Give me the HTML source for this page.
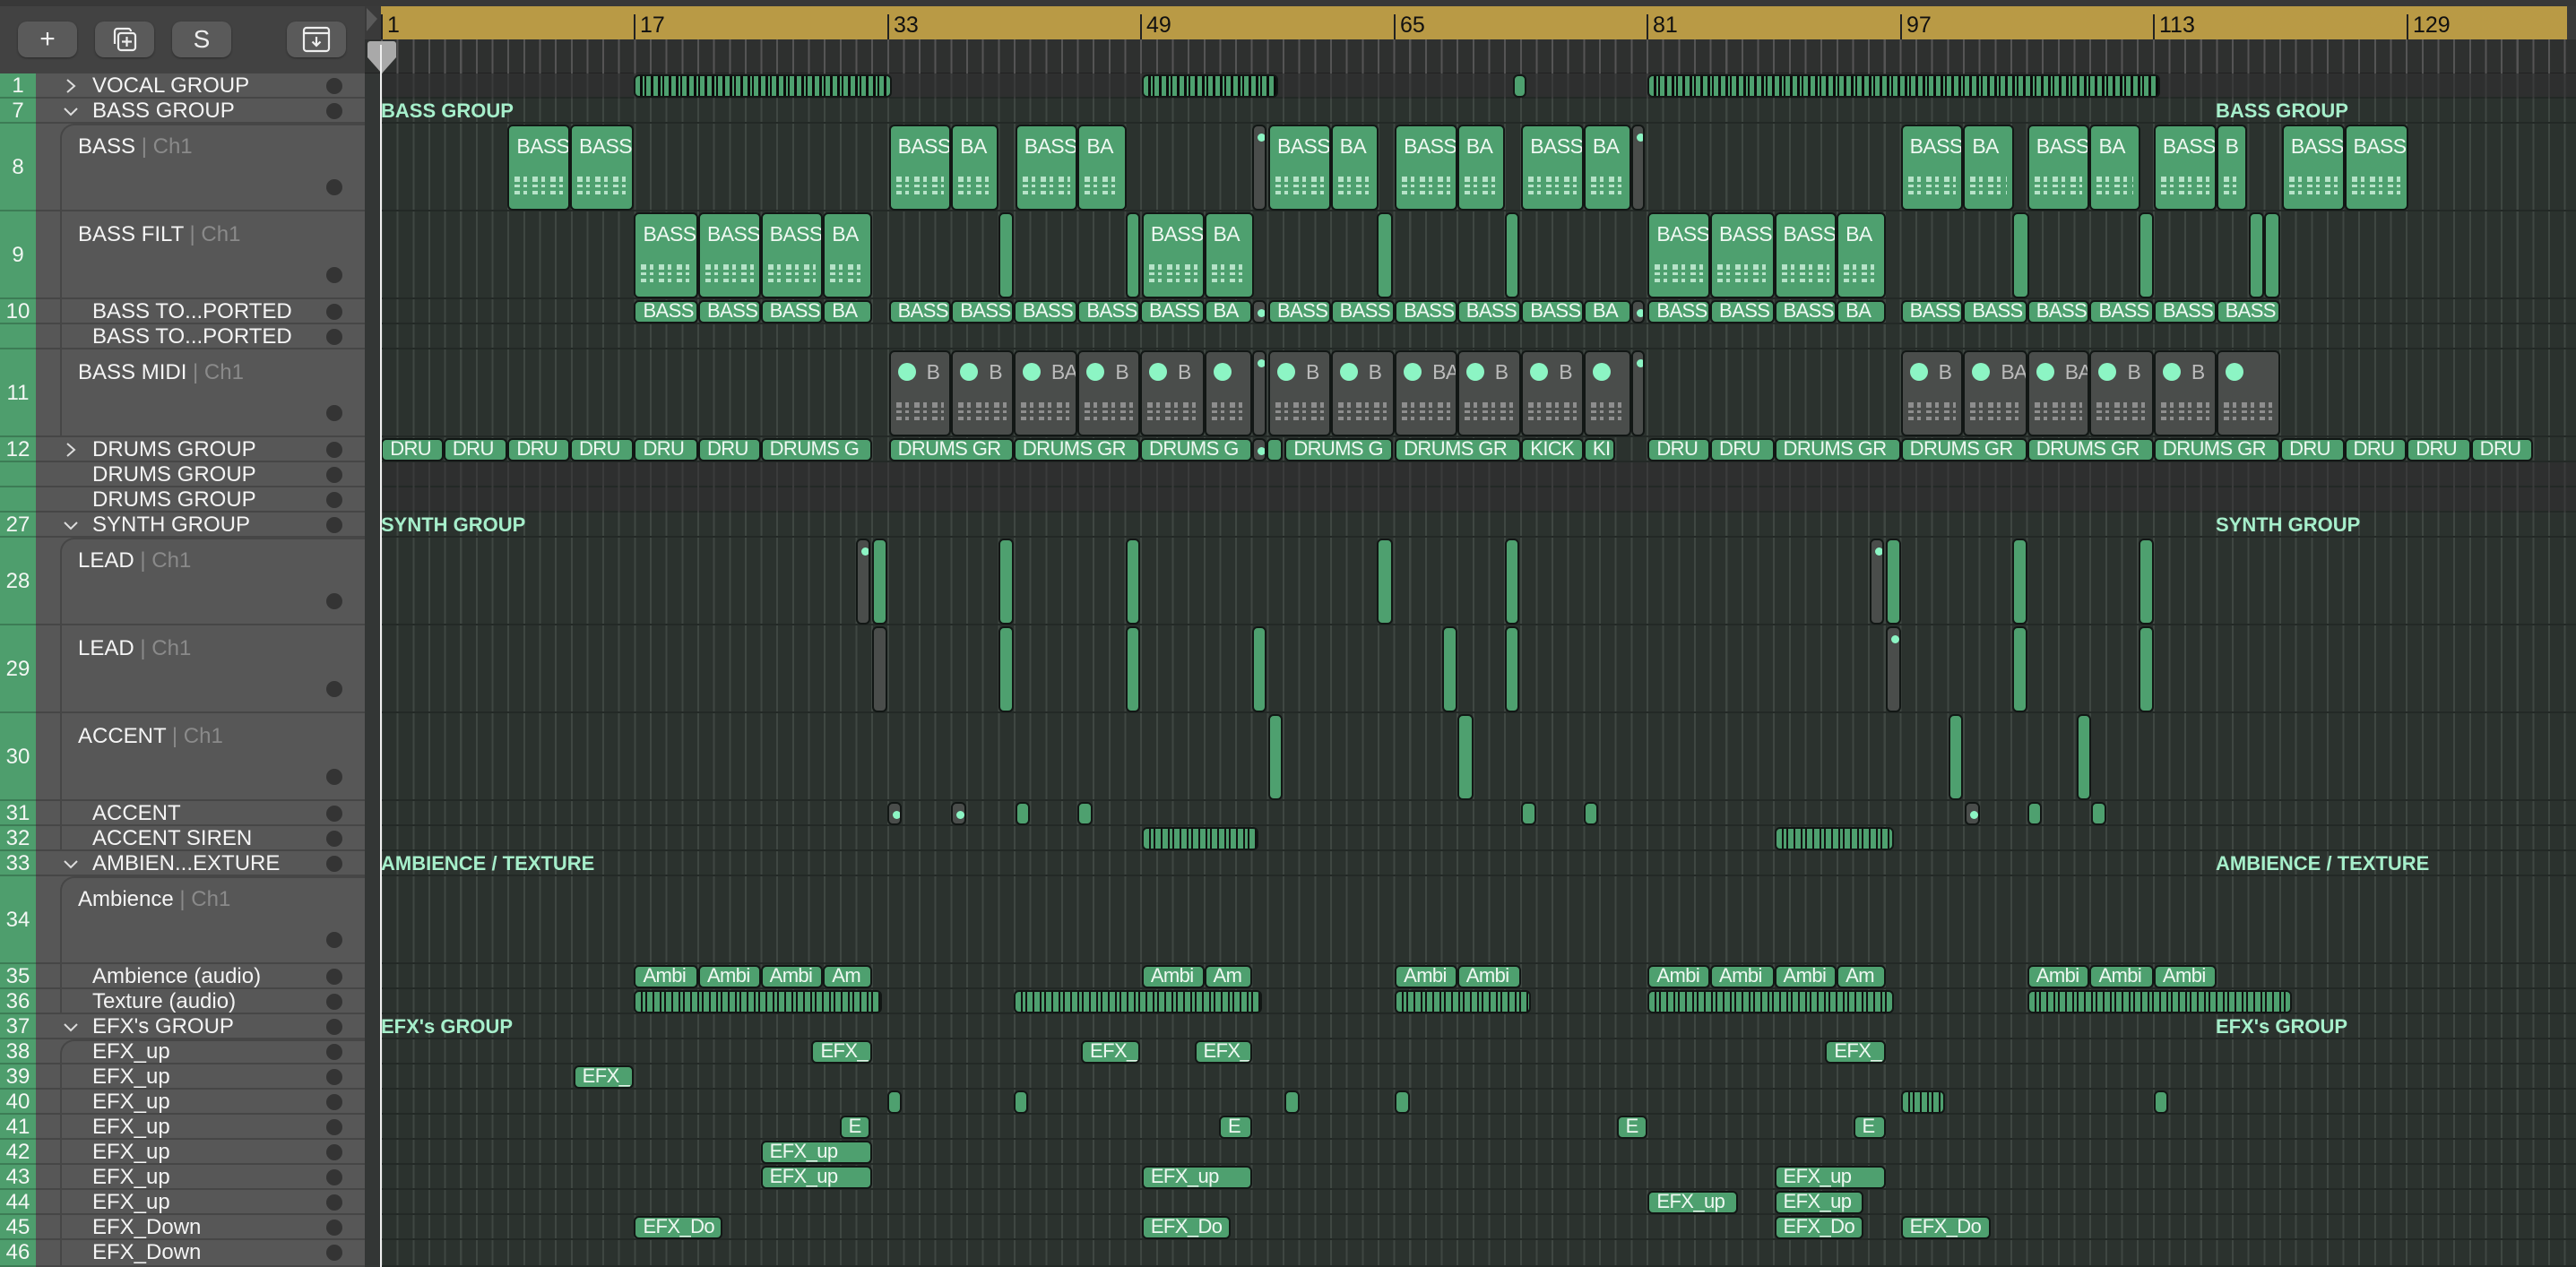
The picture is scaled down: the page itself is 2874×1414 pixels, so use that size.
<!DOCTYPE html>
<html><head><meta charset="utf-8"><style>
*{margin:0;padding:0;box-sizing:border-box}
body{width:2874px;height:1414px;background:#2b322e;overflow:hidden;position:relative;font-family:"Liberation Sans",sans-serif}
.abs{position:absolute}
#top{left:0;top:0;width:425px;height:82px;background:#424242;border-top:7px solid #383838}
.btn{position:absolute;top:24px;width:66px;height:40px;background:#5a5a5a;border-radius:10px;box-shadow:0 1px 2px #2a2a2a;color:#eee;display:flex;align-items:center;justify-content:center;font-size:30px}
#ruler{left:425px;top:7px;width:2439px;height:37px;background:#b99a45}
#rtop{left:407px;top:0;width:2467px;height:7px;background:#383838}
#rright{left:2864px;top:7px;width:10px;height:75px;background:#3a3a3a}
#sub{left:407px;top:44px;width:2467px;height:38px;background:#2e302f;border-bottom:1px solid #222}
.bn{position:absolute;top:9px;font-size:25px;color:#111;padding-left:5px;border-left:2px solid #222;height:30px;line-height:24px}
#grid{left:425px;top:82px;width:2449px;height:1332px;background:repeating-linear-gradient(90deg,#3f4742 0 2px,transparent 2px 17.65px)}
#subgrid{left:425px;top:44px;width:2449px;height:38px;background:repeating-linear-gradient(90deg,#555 0 2px,transparent 2px 17.65px)}
.row{position:absolute;left:425px;width:2449px;border-bottom:2px solid #232926}
.gray{background:#2e2f2f}
.hdr{position:absolute;left:0;width:407px}
.num{position:absolute;left:0;top:0;width:40px;height:100%;background:#4e9e6d;color:#f2f7f3;font-size:24px;text-align:center;border-bottom:2px solid #3c7c55}
.hb{position:absolute;left:40px;right:0;top:0;bottom:0;background:#575757;border-bottom:2px solid #464646}
.name{position:absolute;left:103px;color:#f4f4f4;font-size:24px;white-space:nowrap}
.name .ch{color:#8a8a8a}
.chev{position:absolute;left:68px;top:3px;width:22px;height:22px}
.dot{position:absolute;left:364px;width:18px;height:18px;border-radius:50%;background:#343434}
.inset{position:absolute;left:67px;right:0;top:0;bottom:0;border-left:2px solid #464646}
.c{position:absolute;left:calc(var(--a)*1.8329px);width:calc((var(--b) - var(--a))*1.8329px);top:1px;bottom:1px;background:#4ea06f;border:2px solid #121715;border-radius:6px;color:#eef8f1;font-size:22px;letter-spacing:-0.6px;padding-left:8px;overflow:hidden;white-space:nowrap;line-height:24px}
.s .c{line-height:20px}
.g{background:#4a4d4b}
.st{background:repeating-linear-gradient(90deg,#4ea06f 0 6px,#111 6px 8px,#4ea06f 8px 11px,#111 11px 13px,#4ea06f 13px 19px,#111 19px 21px);padding:0}
.vs{background:repeating-linear-gradient(90deg,#4ea06f 0 5px,#0b0b0b 5px 8px,#4ea06f 8px 10px,#0b0b0b 10px 12px,#4ea06f 12px 17px,#0b0b0b 17px 20px);padding:0}
.big .c{padding-top:10px;font-size:23px}
.nt{position:absolute;left:6px;right:6px;bottom:14px;height:22px;background:repeating-linear-gradient(90deg,#c9efd8 0 6px,transparent 6px 10px,#c9efd8 10px 14px,transparent 14px 20px);opacity:.85;-webkit-mask:linear-gradient(#000 0 6px,transparent 6px 9px,#000 9px 12px,transparent 12px 16px,#000 16px 20px,transparent 20px)}
.g .nt{background:repeating-linear-gradient(90deg,#9a9a9a 0 6px,transparent 6px 10px,#9a9a9a 10px 14px,transparent 14px 20px)}
.md{display:inline-block;width:20px;height:20px;border-radius:50%;background:#8cf5c4;margin-right:12px;vertical-align:-2px}
.sd{position:absolute;left:4px;top:8px;width:9px;height:9px;border-radius:50%;background:#8cf5c4}
.g{color:#bbb}
.gl{position:absolute;top:0;color:#a6efcb;font-weight:bold;font-size:22px;line-height:28px}
</style></head><body>
<div id="grid" class="abs"></div>

<div class="row gray" style="top:82px;height:28px"></div>
<div class="row" style="top:110px;height:28px"></div>
<div class="row" style="top:138px;height:98px"></div>
<div class="row" style="top:236px;height:98px"></div>
<div class="row" style="top:334px;height:28px"></div>
<div class="row" style="top:362px;height:28px"></div>
<div class="row" style="top:390px;height:98px"></div>
<div class="row" style="top:488px;height:28px"></div>
<div class="row gray" style="top:516px;height:28px"></div>
<div class="row gray" style="top:544px;height:28px"></div>
<div class="row" style="top:572px;height:28px"></div>
<div class="row" style="top:600px;height:98px"></div>
<div class="row" style="top:698px;height:98px"></div>
<div class="row" style="top:796px;height:98px"></div>
<div class="row" style="top:894px;height:28px"></div>
<div class="row" style="top:922px;height:28px"></div>
<div class="row" style="top:950px;height:28px"></div>
<div class="row" style="top:978px;height:98px"></div>
<div class="row" style="top:1076px;height:28px"></div>
<div class="row" style="top:1104px;height:28px"></div>
<div class="row" style="top:1132px;height:28px"></div>
<div class="row" style="top:1160px;height:28px"></div>
<div class="row" style="top:1188px;height:28px"></div>
<div class="row" style="top:1216px;height:28px"></div>
<div class="row" style="top:1244px;height:28px"></div>
<div class="row" style="top:1272px;height:28px"></div>
<div class="row" style="top:1300px;height:28px"></div>
<div class="row" style="top:1328px;height:28px"></div>
<div class="row" style="top:1356px;height:28px"></div>
<div class="row" style="top:1384px;height:30px"></div>
<div class="abs" style="left:425px;top:516px;width:2449px;height:56px;background:repeating-linear-gradient(90deg,#3a3b3b 0 2px,transparent 2px 17.65px)"></div>
<div class="abs" style="left:425px;top:82px;width:2449px;height:28px;background:repeating-linear-gradient(90deg,#3a3b3b 0 2px,transparent 2px 17.65px)"></div>

<div class="abs s" style="left:0;top:82px;height:28px;width:2874px">
<div class="c vs" style="--a:386;--b:543"></div>
<div class="c vs" style="--a:695;--b:778"></div>
<div class="c" style="--a:921;--b:929;padding:0"></div>
<div class="c vs" style="--a:1003;--b:1315"></div>
</div>
<div class="abs" style="left:0;top:110px;height:28px;width:2874px">
<div class="gl" style="left:425px">BASS GROUP</div><div class="gl" style="left:2472px">BASS GROUP</div>
</div>

<div class="abs big" style="left:0;top:138px;height:98px;width:2874px">
<div class="c" style="--a:309;--b:347">BASS<div class="nt"></div></div>
<div class="c" style="--a:347;--b:386">BASS<div class="nt"></div></div>
<div class="c" style="--a:541;--b:579">BASS<div class="nt"></div></div>
<div class="c" style="--a:579;--b:608">BA<div class="nt"></div></div>
<div class="c" style="--a:618;--b:656">BASS<div class="nt"></div></div>
<div class="c" style="--a:656;--b:686">BA<div class="nt"></div></div>
<div class="c g" style="--a:762;--b:771;padding:0"><div class="sd"></div></div>
<div class="c" style="--a:772;--b:810">BASS<div class="nt"></div></div>
<div class="c" style="--a:810;--b:839">BA<div class="nt"></div></div>
<div class="c" style="--a:849;--b:887">BASS<div class="nt"></div></div>
<div class="c" style="--a:887;--b:916">BA<div class="nt"></div></div>
<div class="c" style="--a:926;--b:964">BASS<div class="nt"></div></div>
<div class="c" style="--a:964;--b:993">BA<div class="nt"></div></div>
<div class="c g" style="--a:993;--b:1001;padding:0"><div class="sd"></div></div>
<div class="c" style="--a:1157;--b:1195">BASS<div class="nt"></div></div>
<div class="c" style="--a:1195;--b:1226">BA<div class="nt"></div></div>
<div class="c" style="--a:1234;--b:1272">BASS<div class="nt"></div></div>
<div class="c" style="--a:1272;--b:1303">BA<div class="nt"></div></div>
<div class="c" style="--a:1311;--b:1349">BASS<div class="nt"></div></div>
<div class="c" style="--a:1349;--b:1368">B<div class="nt"></div></div>
<div class="c" style="--a:1389;--b:1427">BASS<div class="nt"></div></div>
<div class="c" style="--a:1427;--b:1466">BASS<div class="nt"></div></div>
</div>

<div class="abs big" style="left:0;top:236px;height:98px;width:2874px">
<div class="c" style="--a:386;--b:425">BASS<div class="nt"></div></div>
<div class="c" style="--a:425;--b:463">BASS<div class="nt"></div></div>
<div class="c" style="--a:463;--b:501">BASS<div class="nt"></div></div>
<div class="c" style="--a:501;--b:531">BA<div class="nt"></div></div>
<div class="c" style="--a:608;--b:617;padding:0"></div>
<div class="c" style="--a:685;--b:694;padding:0"></div>
<div class="c" style="--a:695;--b:733">BASS<div class="nt"></div></div>
<div class="c" style="--a:733;--b:763">BA<div class="nt"></div></div>
<div class="c" style="--a:838;--b:848;padding:0"></div>
<div class="c" style="--a:916;--b:925;padding:0"></div>
<div class="c" style="--a:1003;--b:1041">BASS<div class="nt"></div></div>
<div class="c" style="--a:1041;--b:1080">BASS<div class="nt"></div></div>
<div class="c" style="--a:1080;--b:1118">BASS<div class="nt"></div></div>
<div class="c" style="--a:1118;--b:1148">BA<div class="nt"></div></div>
<div class="c" style="--a:1225;--b:1235;padding:0"></div>
<div class="c" style="--a:1302;--b:1311;padding:0"></div>
<div class="c" style="--a:1369;--b:1378;padding:0"></div>
<div class="c" style="--a:1378;--b:1388;padding:0"></div>
</div>

<div class="abs s" style="left:0;top:334px;height:28px;width:2874px">
<div class="c" style="--a:386;--b:425">BASS</div><div class="c" style="--a:425;--b:463">BASS</div><div class="c" style="--a:463;--b:501">BASS</div><div class="c" style="--a:501;--b:531">BA</div>
<div class="c" style="--a:541;--b:579">BASS</div><div class="c" style="--a:579;--b:617">BASS</div><div class="c" style="--a:617;--b:656">BASS</div><div class="c" style="--a:656;--b:694">BASS</div><div class="c" style="--a:694;--b:733">BASS</div><div class="c" style="--a:733;--b:762">BA</div>
<div class="c g" style="--a:762;--b:771;padding:0"><div class="sd"></div></div>
<div class="c" style="--a:772;--b:810">BASS</div><div class="c" style="--a:810;--b:849">BASS</div><div class="c" style="--a:849;--b:887">BASS</div><div class="c" style="--a:887;--b:926">BASS</div><div class="c" style="--a:926;--b:964">BASS</div><div class="c" style="--a:964;--b:993">BA</div>
<div class="c g" style="--a:993;--b:1001;padding:0"><div class="sd"></div></div>
<div class="c" style="--a:1003;--b:1041">BASS</div><div class="c" style="--a:1041;--b:1080">BASS</div><div class="c" style="--a:1080;--b:1118">BASS</div><div class="c" style="--a:1118;--b:1148">BA</div>
<div class="c" style="--a:1157;--b:1195">BASS</div><div class="c" style="--a:1195;--b:1234">BASS</div><div class="c" style="--a:1234;--b:1272">BASS</div><div class="c" style="--a:1272;--b:1311">BASS</div><div class="c" style="--a:1311;--b:1349">BASS</div><div class="c" style="--a:1349;--b:1388">BASS</div>
</div>

<div class="abs big" style="left:0;top:390px;height:98px;width:2874px">
<div class="c g" style="--a:541;--b:579"><span class="md"></span>B<div class="nt"></div></div>
<div class="c g" style="--a:579;--b:617"><span class="md"></span>B<div class="nt"></div></div>
<div class="c g" style="--a:617;--b:656"><span class="md"></span>BA<div class="nt"></div></div>
<div class="c g" style="--a:656;--b:694"><span class="md"></span>B<div class="nt"></div></div>
<div class="c g" style="--a:694;--b:733"><span class="md"></span>B<div class="nt"></div></div>
<div class="c g" style="--a:733;--b:762"><span class="md"></span><div class="nt"></div></div>
<div class="c g" style="--a:762;--b:771;padding:0"><div class="sd"></div></div>
<div class="c g" style="--a:772;--b:810"><span class="md"></span>B<div class="nt"></div></div>
<div class="c g" style="--a:810;--b:849"><span class="md"></span>B<div class="nt"></div></div>
<div class="c g" style="--a:849;--b:887"><span class="md"></span>BA<div class="nt"></div></div>
<div class="c g" style="--a:887;--b:926"><span class="md"></span>B<div class="nt"></div></div>
<div class="c g" style="--a:926;--b:964"><span class="md"></span>B<div class="nt"></div></div>
<div class="c g" style="--a:964;--b:993"><span class="md"></span><div class="nt"></div></div>
<div class="c g" style="--a:993;--b:1001;padding:0"><div class="sd"></div></div>
<div class="c g" style="--a:1157;--b:1195"><span class="md"></span>B<div class="nt"></div></div>
<div class="c g" style="--a:1195;--b:1234"><span class="md"></span>BA<div class="nt"></div></div>
<div class="c g" style="--a:1234;--b:1272"><span class="md"></span>BA<div class="nt"></div></div>
<div class="c g" style="--a:1272;--b:1311"><span class="md"></span>B<div class="nt"></div></div>
<div class="c g" style="--a:1311;--b:1349"><span class="md"></span>B<div class="nt"></div></div>
<div class="c g" style="--a:1349;--b:1388"><span class="md"></span><div class="nt"></div></div>
</div>

<div class="abs s" style="left:0;top:488px;height:28px;width:2874px">
<div class="c" style="--a:232;--b:270">DRU</div><div class="c" style="--a:270;--b:309">DRU</div><div class="c" style="--a:309;--b:347">DRU</div><div class="c" style="--a:347;--b:386">DRU</div><div class="c" style="--a:386;--b:425">DRU</div><div class="c" style="--a:425;--b:463">DRU</div><div class="c" style="--a:463;--b:531">DRUMS G</div>
<div class="c" style="--a:541;--b:617">DRUMS GR</div><div class="c" style="--a:617;--b:694">DRUMS GR</div><div class="c" style="--a:694;--b:762">DRUMS G</div>
<div class="c g" style="--a:762;--b:771;padding:0"><div class="sd"></div></div><div class="c" style="--a:771;--b:781;padding:0"></div>
<div class="c" style="--a:782;--b:848">DRUMS G</div><div class="c" style="--a:849;--b:926">DRUMS GR</div><div class="c" style="--a:926;--b:964">KICK</div><div class="c" style="--a:964;--b:983">KI</div>
<div class="c" style="--a:1003;--b:1041">DRU</div><div class="c" style="--a:1041;--b:1080">DRU</div><div class="c" style="--a:1080;--b:1157">DRUMS GR</div><div class="c" style="--a:1157;--b:1234">DRUMS GR</div><div class="c" style="--a:1234;--b:1311">DRUMS GR</div><div class="c" style="--a:1311;--b:1388">DRUMS GR</div><div class="c" style="--a:1388;--b:1427">DRU</div><div class="c" style="--a:1427;--b:1465">DRU</div><div class="c" style="--a:1465;--b:1504">DRU</div><div class="c" style="--a:1504;--b:1542">DRU</div>
</div>

<div class="abs" style="left:0;top:572px;height:28px;width:2874px">
<div class="gl" style="left:425px">SYNTH GROUP</div><div class="gl" style="left:2472px">SYNTH GROUP</div>
</div>
<div class="abs" style="left:0;top:600px;height:98px;width:2874px">
<div class="c g" style="--a:521;--b:530;padding:0"><div class="sd"></div></div><div class="c" style="--a:531;--b:540;padding:0"></div>
<div class="c" style="--a:608;--b:617;padding:0"></div><div class="c" style="--a:685;--b:694;padding:0"></div><div class="c" style="--a:838;--b:848;padding:0"></div><div class="c" style="--a:916;--b:925;padding:0"></div>
<div class="c g" style="--a:1138;--b:1147;padding:0"><div class="sd"></div></div><div class="c" style="--a:1148;--b:1157;padding:0"></div>
<div class="c" style="--a:1225;--b:1234;padding:0"></div><div class="c" style="--a:1302;--b:1311;padding:0"></div>
</div>
<div class="abs" style="left:0;top:698px;height:98px;width:2874px">
<div class="c g" style="--a:531;--b:540;padding:0"></div><div class="c" style="--a:608;--b:617;padding:0"></div><div class="c" style="--a:685;--b:694;padding:0"></div><div class="c" style="--a:762;--b:771;padding:0"></div><div class="c" style="--a:878;--b:887;padding:0"></div><div class="c" style="--a:916;--b:925;padding:0"></div>
<div class="c g" style="--a:1148;--b:1157;padding:0"><div class="sd"></div></div><div class="c" style="--a:1225;--b:1234;padding:0"></div><div class="c" style="--a:1302;--b:1311;padding:0"></div>
</div>
<div class="abs" style="left:0;top:796px;height:98px;width:2874px">
<div class="c" style="--a:772;--b:781;padding:0"></div><div class="c" style="--a:887;--b:897;padding:0"></div><div class="c" style="--a:1186;--b:1195;padding:0"></div><div class="c" style="--a:1264;--b:1273;padding:0"></div>
</div>
<div class="abs" style="left:0;top:894px;height:28px;width:2874px">
<div class="c g" style="--a:540;--b:549;padding:0"><div class="sd"></div></div><div class="c g" style="--a:579;--b:588;padding:0"><div class="sd"></div></div>
<div class="c" style="--a:618;--b:627;padding:0"></div><div class="c" style="--a:656;--b:665;padding:0"></div><div class="c" style="--a:926;--b:935;padding:0"></div><div class="c" style="--a:964;--b:973;padding:0"></div>
<div class="c g" style="--a:1196;--b:1205;padding:0"><div class="sd"></div></div><div class="c" style="--a:1234;--b:1243;padding:0"></div><div class="c" style="--a:1273;--b:1282;padding:0"></div>
</div>
<div class="abs" style="left:0;top:922px;height:28px;width:2874px">
<div class="c st" style="--a:695;--b:766"></div><div class="c st" style="--a:1080;--b:1153"></div>
</div>
<div class="abs" style="left:0;top:950px;height:28px;width:2874px">
<div class="gl" style="left:425px">AMBIENCE / TEXTURE</div><div class="gl" style="left:2472px">AMBIENCE / TEXTURE</div>
</div>
<div class="abs s" style="left:0;top:1076px;height:28px;width:2874px">
<div class="c" style="--a:386;--b:425">Ambi</div><div class="c" style="--a:425;--b:463">Ambi</div><div class="c" style="--a:463;--b:501">Ambi</div><div class="c" style="--a:501;--b:531">Am</div>
<div class="c" style="--a:695;--b:733">Ambi</div><div class="c" style="--a:733;--b:762">Am</div>
<div class="c" style="--a:849;--b:887">Ambi</div><div class="c" style="--a:887;--b:926">Ambi</div>
<div class="c" style="--a:1003;--b:1041">Ambi</div><div class="c" style="--a:1041;--b:1080">Ambi</div><div class="c" style="--a:1080;--b:1118">Ambi</div><div class="c" style="--a:1118;--b:1148">Am</div>
<div class="c" style="--a:1234;--b:1272">Ambi</div><div class="c" style="--a:1272;--b:1311">Ambi</div><div class="c" style="--a:1311;--b:1349">Ambi</div>
</div>
<div class="abs" style="left:0;top:1104px;height:28px;width:2874px">
<div class="c st" style="--a:386;--b:537"></div><div class="c st" style="--a:617;--b:768"></div><div class="c st" style="--a:849;--b:932"></div><div class="c st" style="--a:1003;--b:1153"></div><div class="c st" style="--a:1234;--b:1395"></div>
</div>
<div class="abs" style="left:0;top:1132px;height:28px;width:2874px">
<div class="gl" style="left:425px">EFX's GROUP</div><div class="gl" style="left:2472px">EFX's GROUP</div>
</div>
<div class="abs s" style="left:0;top:1160px;height:28px;width:2874px">
<div class="c" style="--a:494;--b:531">EFX_</div><div class="c" style="--a:658;--b:694">EFX_</div><div class="c" style="--a:727;--b:762">EFX_</div><div class="c" style="--a:1111;--b:1148">EFX_</div>
</div>
<div class="abs s" style="left:0;top:1188px;height:28px;width:2874px"><div class="c" style="--a:349;--b:386">EFX_</div></div>
<div class="abs" style="left:0;top:1216px;height:28px;width:2874px">
<div class="c" style="--a:540;--b:549;padding:0"></div><div class="c" style="--a:617;--b:626;padding:0"></div><div class="c" style="--a:782;--b:791;padding:0"></div><div class="c" style="--a:849;--b:858;padding:0"></div><div class="c st" style="--a:1157;--b:1184"></div><div class="c" style="--a:1311;--b:1320;padding:0"></div>
</div>
<div class="abs s" style="left:0;top:1244px;height:28px;width:2874px">
<div class="c" style="--a:511;--b:530">E</div><div class="c" style="--a:742;--b:762">E</div><div class="c" style="--a:984;--b:1003">E</div><div class="c" style="--a:1128;--b:1148">E</div>
</div>
<div class="abs s" style="left:0;top:1272px;height:28px;width:2874px"><div class="c" style="--a:463;--b:531">EFX_up</div></div>
<div class="abs s" style="left:0;top:1300px;height:28px;width:2874px">
<div class="c" style="--a:463;--b:531">EFX_up</div><div class="c" style="--a:695;--b:762">EFX_up</div><div class="c" style="--a:1080;--b:1148">EFX_up</div>
</div>
<div class="abs s" style="left:0;top:1328px;height:28px;width:2874px">
<div class="c" style="--a:1003;--b:1058">EFX_up</div><div class="c" style="--a:1080;--b:1134">EFX_up</div>
</div>
<div class="abs s" style="left:0;top:1356px;height:28px;width:2874px">
<div class="c" style="--a:386;--b:440">EFX_Do</div><div class="c" style="--a:695;--b:749">EFX_Do</div><div class="c" style="--a:1080;--b:1134">EFX_Do</div><div class="c" style="--a:1157;--b:1212">EFX_Do</div>
</div>

<div class="abs" style="left:407px;top:82px;width:18px;height:1332px;background:#333635"></div>
<div class="abs" style="left:0;top:82px;width:407px;height:1332px;background:#575757"></div>

<div class="hdr" style="top:82px;height:28px"><div class="hb"></div><div class="num">1</div><svg class="chev" viewBox="0 0 22 22"><path d="M7 4l8 7-8 7" fill="none" stroke="#ddd" stroke-width="2"/></svg><div class="name">VOCAL GROUP</div><div class="dot" style="top:5px"></div></div>
<div class="hdr" style="top:110px;height:28px"><div class="hb"></div><div class="num">7</div><svg class="chev" viewBox="0 0 22 22"><path d="M4 8l7 7 7-7" fill="none" stroke="#ddd" stroke-width="2"/></svg><div class="name">BASS GROUP</div><div class="dot" style="top:5px"></div></div>
<div class="hdr" style="top:138px;height:98px"><div class="hb"></div><div class="inset" style="border-top:2px solid #464646;border-top-left-radius:16px"></div><div class="num" style="line-height:98px">8</div><div class="name" style="left:87px;top:12px">BASS <span class="ch">| Ch1</span></div><div class="dot" style="top:62px"></div></div>
<div class="hdr" style="top:236px;height:98px"><div class="hb"></div><div class="inset"></div><div class="num" style="line-height:98px">9</div><div class="name" style="left:87px;top:12px">BASS FILT <span class="ch">| Ch1</span></div><div class="dot" style="top:62px"></div></div>
<div class="hdr" style="top:334px;height:28px"><div class="hb"></div><div class="inset"></div><div class="num">10</div><div class="name">BASS TO...PORTED</div><div class="dot" style="top:5px"></div></div>
<div class="hdr" style="top:362px;height:28px"><div class="hb"></div><div class="inset"></div><div class="num"></div><div class="name">BASS TO...PORTED</div><div class="dot" style="top:5px"></div></div>
<div class="hdr" style="top:390px;height:98px"><div class="hb"></div><div class="inset"></div><div class="num" style="line-height:98px">11</div><div class="name" style="left:87px;top:12px">BASS MIDI <span class="ch">| Ch1</span></div><div class="dot" style="top:62px"></div></div>
<div class="hdr" style="top:488px;height:28px"><div class="hb"></div><div class="num">12</div><svg class="chev" viewBox="0 0 22 22"><path d="M7 4l8 7-8 7" fill="none" stroke="#ddd" stroke-width="2"/></svg><div class="name">DRUMS GROUP</div><div class="dot" style="top:5px"></div></div>
<div class="hdr" style="top:516px;height:28px"><div class="hb"></div><div class="num"></div><div class="name">DRUMS GROUP</div><div class="dot" style="top:5px"></div></div>
<div class="hdr" style="top:544px;height:28px"><div class="hb"></div><div class="num"></div><div class="name">DRUMS GROUP</div><div class="dot" style="top:5px"></div></div>
<div class="hdr" style="top:572px;height:28px"><div class="hb"></div><div class="num">27</div><svg class="chev" viewBox="0 0 22 22"><path d="M4 8l7 7 7-7" fill="none" stroke="#ddd" stroke-width="2"/></svg><div class="name">SYNTH GROUP</div><div class="dot" style="top:5px"></div></div>
<div class="hdr" style="top:600px;height:98px"><div class="hb"></div><div class="inset" style="border-top:2px solid #464646;border-top-left-radius:16px"></div><div class="num" style="line-height:98px">28</div><div class="name" style="left:87px;top:12px">LEAD <span class="ch">| Ch1</span></div><div class="dot" style="top:62px"></div></div>
<div class="hdr" style="top:698px;height:98px"><div class="hb"></div><div class="inset"></div><div class="num" style="line-height:98px">29</div><div class="name" style="left:87px;top:12px">LEAD <span class="ch">| Ch1</span></div><div class="dot" style="top:62px"></div></div>
<div class="hdr" style="top:796px;height:98px"><div class="hb"></div><div class="inset"></div><div class="num" style="line-height:98px">30</div><div class="name" style="left:87px;top:12px">ACCENT <span class="ch">| Ch1</span></div><div class="dot" style="top:62px"></div></div>
<div class="hdr" style="top:894px;height:28px"><div class="hb"></div><div class="inset"></div><div class="num">31</div><div class="name">ACCENT</div><div class="dot" style="top:5px"></div></div>
<div class="hdr" style="top:922px;height:28px"><div class="hb"></div><div class="inset"></div><div class="num">32</div><div class="name">ACCENT SIREN</div><div class="dot" style="top:5px"></div></div>
<div class="hdr" style="top:950px;height:28px"><div class="hb"></div><div class="num">33</div><svg class="chev" viewBox="0 0 22 22"><path d="M4 8l7 7 7-7" fill="none" stroke="#ddd" stroke-width="2"/></svg><div class="name">AMBIEN...EXTURE</div><div class="dot" style="top:5px"></div></div>
<div class="hdr" style="top:978px;height:98px"><div class="hb"></div><div class="inset" style="border-top:2px solid #464646;border-top-left-radius:16px"></div><div class="num" style="line-height:98px">34</div><div class="name" style="left:87px;top:12px">Ambience <span class="ch">| Ch1</span></div><div class="dot" style="top:62px"></div></div>
<div class="hdr" style="top:1076px;height:28px"><div class="hb"></div><div class="inset"></div><div class="num">35</div><div class="name">Ambience (audio)</div><div class="dot" style="top:5px"></div></div>
<div class="hdr" style="top:1104px;height:28px"><div class="hb"></div><div class="inset"></div><div class="num">36</div><div class="name">Texture (audio)</div><div class="dot" style="top:5px"></div></div>
<div class="hdr" style="top:1132px;height:28px"><div class="hb"></div><div class="num">37</div><svg class="chev" viewBox="0 0 22 22"><path d="M4 8l7 7 7-7" fill="none" stroke="#ddd" stroke-width="2"/></svg><div class="name">EFX's GROUP</div><div class="dot" style="top:5px"></div></div>
<div class="hdr" style="top:1160px;height:28px"><div class="hb"></div><div class="inset" style="border-top:2px solid #464646;border-top-left-radius:16px"></div><div class="num">38</div><div class="name">EFX_up</div><div class="dot" style="top:5px"></div></div>
<div class="hdr" style="top:1188px;height:28px"><div class="hb"></div><div class="inset"></div><div class="num">39</div><div class="name">EFX_up</div><div class="dot" style="top:5px"></div></div>
<div class="hdr" style="top:1216px;height:28px"><div class="hb"></div><div class="inset"></div><div class="num">40</div><div class="name">EFX_up</div><div class="dot" style="top:5px"></div></div>
<div class="hdr" style="top:1244px;height:28px"><div class="hb"></div><div class="inset"></div><div class="num">41</div><div class="name">EFX_up</div><div class="dot" style="top:5px"></div></div>
<div class="hdr" style="top:1272px;height:28px"><div class="hb"></div><div class="inset"></div><div class="num">42</div><div class="name">EFX_up</div><div class="dot" style="top:5px"></div></div>
<div class="hdr" style="top:1300px;height:28px"><div class="hb"></div><div class="inset"></div><div class="num">43</div><div class="name">EFX_up</div><div class="dot" style="top:5px"></div></div>
<div class="hdr" style="top:1328px;height:28px"><div class="hb"></div><div class="inset"></div><div class="num">44</div><div class="name">EFX_up</div><div class="dot" style="top:5px"></div></div>
<div class="hdr" style="top:1356px;height:28px"><div class="hb"></div><div class="inset"></div><div class="num">45</div><div class="name">EFX_Down</div><div class="dot" style="top:5px"></div></div>
<div class="hdr" style="top:1384px;height:30px"><div class="hb"></div><div class="inset"></div><div class="num">46</div><div class="name">EFX_Down</div><div class="dot" style="top:5px"></div></div>

<div id="top" class="abs">
<div class="btn" style="left:20px;top:17px">+</div>
<div class="btn" style="left:106px;top:17px"><svg width="34" height="34" viewBox="0 0 34 34" fill="none" stroke="#eee" stroke-width="2.2"><path d="M6 22V8a3 3 0 0 1 3-3h12a3 3 0 0 1 3 3"/><rect x="10" y="10" width="19" height="19" rx="3"/><path d="M19.5 14v11M14 19.5h11"/></svg></div>
<div class="btn" style="left:192px;top:17px;font-size:28px">S</div>
<div class="btn" style="left:320px;top:17px"><svg width="34" height="32" viewBox="0 0 34 32" fill="none" stroke="#eee" stroke-width="2.2"><rect x="3" y="3" width="28" height="26" rx="3"/><path d="M3 9h28M17 13v10M12.5 18.5l4.5 4.5 4.5-4.5"/></svg></div>
</div>
<div id="rtop" class="abs"></div>
<div class="abs" style="left:407px;top:7px;width:18px;height:37px;background:#3a3a3a"></div>
<svg class="abs" style="left:407px;top:9px" width="16" height="28"><path d="M2 0L14 12L2 26Z" fill="#5a5a5a"/></svg>
<div id="ruler" class="abs">
<div class="bn" style="left:0">1</div>
<div class="bn" style="left:282px">17</div>
<div class="bn" style="left:565px">33</div>
<div class="bn" style="left:847px">49</div>
<div class="bn" style="left:1130px">65</div>
<div class="bn" style="left:1412px">81</div>
<div class="bn" style="left:1695px">97</div>
<div class="bn" style="left:1977px">113</div>
<div class="bn" style="left:2260px">129</div>
</div>
<div id="rright" class="abs"></div>
<div id="sub" class="abs"></div>
<div id="subgrid" class="abs"></div>
<svg class="abs" style="left:409px;top:46px" width="34" height="36"><path d="M4 0H30a3 3 0 0 1 3 3V18L17 36L1 18V3a3 3 0 0 1 3-3Z" fill="#a9a9a9"/></svg>
<div class="abs" style="left:424px;top:50px;width:2px;height:1364px;background:#f0f0f0"></div>
</body></html>
